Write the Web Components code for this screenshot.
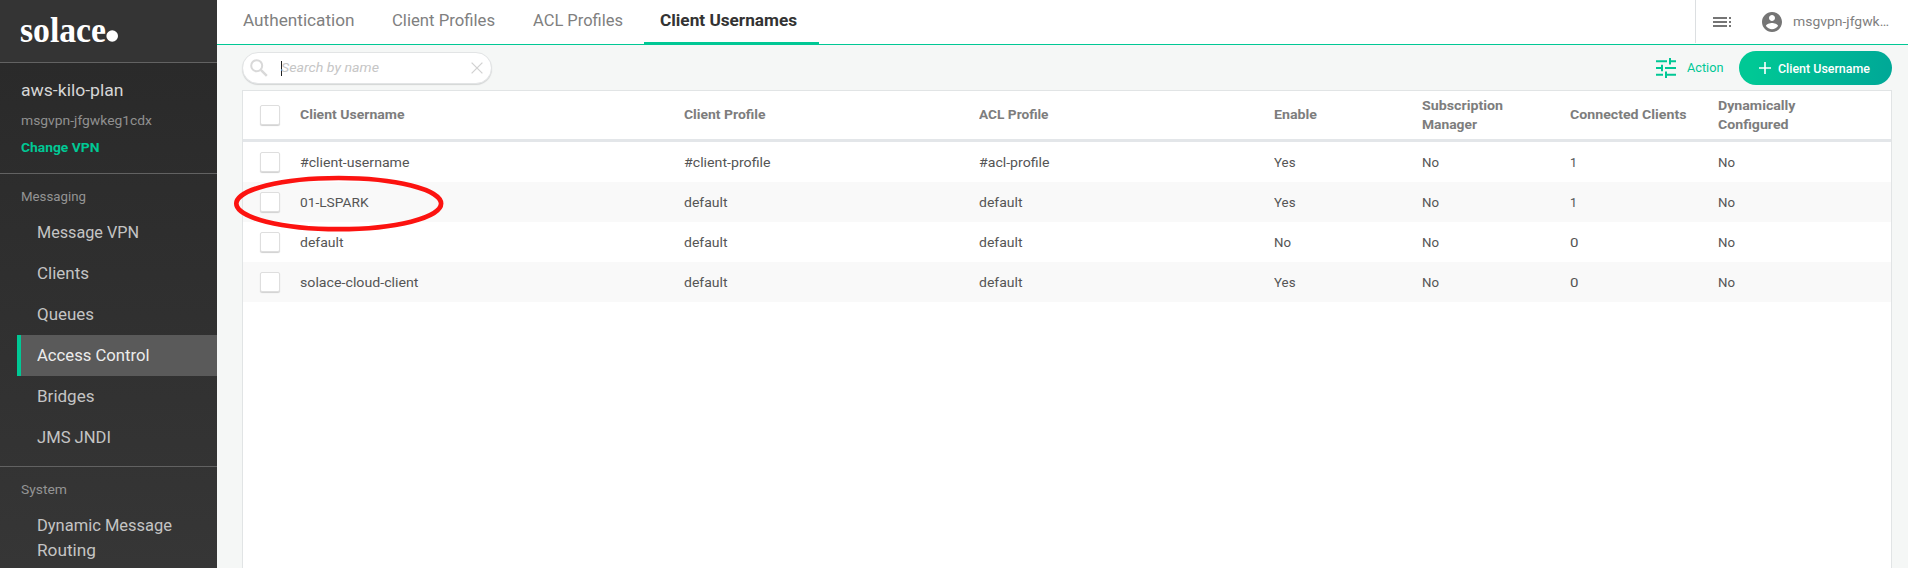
<!DOCTYPE html>
<html lang="en">
<head>
<meta charset="utf-8">
<title>Client Usernames</title>
<style>
html,body{margin:0;height:100%;overflow:hidden}
body{font-family:Roboto,"Liberation Sans",sans-serif;font-size:13px;background:#f5f7f6}
</style>
</head>
<body>
<vpn-app></vpn-app>
<script>
const define = (name, html, init) => customElements.define(name, class extends HTMLElement {
  connectedCallback() {
    if (this.shadowRoot) return;
    const t = document.createElement('template');
    t.innerHTML = typeof html === 'function' ? html(this) : html;
    this.attachShadow({mode: 'open'}).append(t.content.cloneNode(true));
    if (init) init(this);
  }
});

/* A run of text whose letters are widened to span the width given in "w". */
define('fit-text', `<style>:host{display:block;white-space:nowrap}span{display:inline-block;transform-origin:0 50%}</style><span><slot></slot></span>`, el => {
  const w = parseFloat(el.getAttribute('w'));
  const span = el.shadowRoot.querySelector('span');
  const now = span.getBoundingClientRect().width;
  if (w && now) {
    span.style.transform = `scaleX(${((w + 1) / now).toFixed(4)})`;
    span.style.marginRight = (w + 1 - now).toFixed(2) + 'px';
  }
});

define('solace-logo', `<style>
:host{display:flex;align-items:flex-start;height:62px;box-sizing:border-box;padding:10px 0 0 20px;background:#343434;color:#fff}
fit-text{font:bold 35.5px/40px "Liberation Serif",serif}
svg{display:block;margin:20px 0 0 0}
</style><fit-text w="85">solace</fit-text><svg width="13" height="12"><circle cx="6.2" cy="6" r="5.8" fill="#fff"/></svg>`);

define('nav-item', `<style>
:host{display:flex;margin-left:17px;padding-left:16px;border-left:4px solid transparent;font-size:16px;line-height:41px;color:#c4c4c4}
:host([active]){background:#5a5a5a;border-color:#00c895;color:#ececec}
:host([tall]){line-height:25px}
</style><slot></slot>`);

define('side-bar', `<style>
:host{display:flex;flex-direction:column;width:217px;flex:none;height:568px;overflow:hidden;background:linear-gradient(#2a2a2a 63px,#363636)}
.vpn{border:solid #626262;border-width:1px 0;padding:16px 0 0 21px;height:94px}
.name{font-size:16px;line-height:24px;color:#d6d6d6}
.id{line-height:26px;color:#909090;padding:5px 0 1px}
.change{line-height:26px;font-weight:700;color:#00c895}
.head{line-height:19px;color:#949494;padding:13px 0 6px 21px}
.sys{border-top:1px solid #626262;margin-top:8px;padding-bottom:14px}
</style>
<solace-logo></solace-logo>
<div class="vpn">
<fit-text class="name" w="101.5">aws-kilo-plan</fit-text>
<fit-text class="id" w="130">msgvpn-jfgwkeg1cdx</fit-text>
<fit-text class="change" w="77.5">Change VPN</fit-text>
</div>
<fit-text class="head" w="64">Messaging</fit-text>
<nav-item><fit-text w="101">Message VPN</fit-text></nav-item>
<nav-item><fit-text w="51">Clients</fit-text></nav-item>
<nav-item><fit-text w="56">Queues</fit-text></nav-item>
<nav-item active><fit-text w="111.5">Access Control</fit-text></nav-item>
<nav-item><fit-text w="56.5">Bridges</fit-text></nav-item>
<nav-item><fit-text w="73">JMS JNDI</fit-text></nav-item>
<fit-text class="head sys" w="45">System</fit-text>
<nav-item tall><div><fit-text w="134">Dynamic Message</fit-text><fit-text w="58">Routing</fit-text></div></nav-item>`);

define('top-bar', `<style>
:host{display:flex;height:44px;background:#fff;border-bottom:1px solid #00c895;padding-left:10px;color:#808080}
.tab{box-sizing:border-box;padding-left:16px;font-size:16px;line-height:41px;height:44px}
.on{border-bottom:2px solid #00c895;color:#333;font-weight:700}
.user{margin-left:auto;width:213px;box-sizing:border-box;height:43px;border-left:1px solid #dcdfe1;display:flex;align-items:center;padding-left:17px}
.user fit-text{margin-left:11px;line-height:20px}
svg{display:block;flex:none}
.face{margin-left:30px}
</style>
<div class="tab" style="width:149px"><fit-text w="110.5">Authentication</fit-text></div>
<div class="tab" style="width:141px"><fit-text w="102">Client Profiles</fit-text></div>
<div class="tab" style="width:127px"><fit-text w="89">ACL Profiles</fit-text></div>
<div class="tab on" style="width:175px"><fit-text w="136">Client Usernames</fit-text></div>
<div class="user">
<svg width="19" height="12" fill="#757575"><path d="M0 1h14v2H0zM0 5h14v2H0zM0 9h14v2H0zM16 1h2v2h-2zM16 5h2v2h-2zM16 9h2v2h-2z"/></svg>
<svg class="face" width="20" height="20" viewBox="2 2 20 20" fill="#757575"><path d="M12 2C6.48 2 2 6.48 2 12s4.48 10 10 10 10-4.480 10-10S17.520 2 12 2zm0 3c1.660 0 3 1.340 3 3s-1.340 3-3 3-3-1.340-3-3 1.340-3 3-3zm0 14.200c-2.500 0-4.710-1.280-6-3.220.030-1.990 4-3.080 6-3.080 1.990 0 5.970 1.090 6 3.080-1.290 1.940-3.500 3.220-6 3.220z"/></svg>
<fit-text w="95">msgvpn-jfgwk…</fit-text>
</div>`);

define('search-box', `<style>
:host{display:flex;align-items:center;box-sizing:border-box;width:250px;height:32px;border:1px solid #e2e4e5;border-radius:16px;background:#fff;box-shadow:0 1px 1px #d3d5d5;padding:0 8px 0 7px}
i{width:1px;height:15px;background:#222;margin-left:13px}
fit-text{font-style:italic;color:#c6c6c6;line-height:30px;margin-left:-1px}
svg{display:block}
.x{margin-left:auto}
</style>
<svg width="18" height="18" fill="none" stroke="#d9d9d9" stroke-width="2"><circle cx="6.700" cy="6.700" r="5.500"/><path d="M10.800 10.800L16.800 16.800" stroke-width="2.500"/></svg>
<i></i><fit-text w="97">Search by name</fit-text>
<svg class="x" width="12" height="12" stroke="#d2d2d2" stroke-width="1.300"><path d="M.6.600L11.400 11.400M11.400.600L.6 11.400"/></svg>`);

define('tool-bar', `<style>
:host{display:flex;height:45px;box-sizing:border-box;padding:7px 16px 0 25px;align-items:flex-start}
.act{margin:6px 16px 0 auto;display:flex;align-items:center;gap:11px;color:#00c895;line-height:20px}
.btn{display:flex;align-items:center;width:153px;height:34px;margin-top:-1px;border-radius:17px;box-sizing:border-box;padding-left:20px;gap:7px;color:#fff;font-weight:500;background:linear-gradient(100deg,#00c895 10%,#00a997 95%)}
svg{display:block}
</style>
<search-box></search-box>
<div class="act"><svg width="20" height="20" viewBox="0 0 20 20" fill="#00c895"><path d="M0 2.200h11v2H0zM13 0h2v2.200h5v2h-5v2.200h-2zM5 6.800h2v6.400H5V11H0V9h5zM9 9h11v2H9zM0 15.800h7v2H0zM9 13.600h2v2.200h9v2h-9V20H9z"/></svg><fit-text w="35.500">Action</fit-text></div>
<div class="btn"><svg width="12" height="12" stroke="#fff" stroke-width="1.600"><path d="M6 0V12M0 6H12"/></svg><fit-text w="91">Client Username</fit-text></div>`);

define('check-box', `<style>:host{display:block;width:20px;height:20px;box-sizing:border-box;border:1px solid #dedede;border-radius:2px;background:#fff;box-shadow:0 1px 1px #d0d0d0;margin-left:17px}</style>`);

define('table-row', `<style>
:host{display:grid;grid-template-columns:57px 384px 295px 295px 148px 148px 148px 1fr;align-items:center;height:40px;color:#555}
:host([shade]){background:#f9f9f9}
:host([head]){height:48px;border-bottom:3px solid #e3e6e9;color:#7d7d7d;font-weight:700;line-height:19px}
</style><check-box></check-box><slot></slot>`);

define('user-table', () => {
  const row = (vals, ws, attr) => `<table-row ${attr}>${vals.map((v, i) => `<fit-text w="${ws[i]}">${v}</fit-text>`).join('')}</table-row>`;
  const def = 42.5, yes = 20.5, no = 16;
  return `<style>
:host{display:block;flex:1;margin:0 16px 0 25px;border:1px solid #e1e4e5;border-bottom:0;background:#fff;position:relative}
[head]>fit-text{margin-bottom:2px}
.mark{position:absolute;left:-10px;top:84px}
</style>
<table-row head><fit-text w="103.500">Client Username</fit-text><fit-text w="80.500">Client Profile</fit-text><fit-text w="68.500">ACL Profile</fit-text><fit-text w="42">Enable</fit-text><div><fit-text w="80">Subscription</fit-text><fit-text w="54">Manager</fit-text></div><fit-text w="115.500">Connected Clients</fit-text><div><fit-text w="76.500">Dynamically</fit-text><fit-text w="69.500">Configured</fit-text></div></table-row>
${row(['#client-username','#client-profile','#acl-profile','Yes','No','1','No'],[108.5,85.5,69.5,yes,no,6,no],'')}
${row(['01-LSPARK','default','default','Yes','No','1','No'],[67.5,def,def,yes,no,6,no],'shade')}
${row(['default','default','default','No','No','0','No'],[def,def,def,no,no,7.5,no],'')}
${row(['solace-cloud-client','default','default','Yes','No','0','No'],[117.5,def,def,yes,no,7.5,no],'shade')}
<svg class="mark" width="212" height="60" fill="none" stroke="#fc1310" stroke-width="4.700"><ellipse cx="105.700" cy="28.600" rx="102.400" ry="25.600"/></svg>`;
});

define('vpn-app', `<style>
:host{display:flex;height:568px}
main{flex:1;display:flex;flex-direction:column;min-width:0}
</style><side-bar></side-bar><main><top-bar></top-bar><tool-bar></tool-bar><user-table></user-table></main>`);
</script>
</body>
</html>
